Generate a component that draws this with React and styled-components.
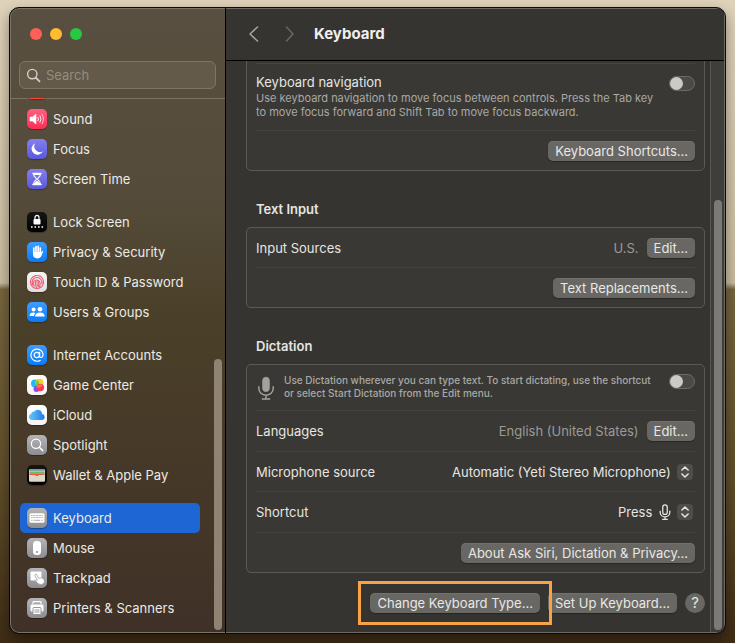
import React from 'react';
import styled, { createGlobalStyle } from 'styled-components';

const SIDEBAR = [
  [['', 'notifications']],
  [['Sound', 'sound'], ['Focus', 'focus'], ['Screen Time', 'hourglass']],
  [['Lock Screen', 'lock'], ['Privacy & Security', 'hand'], ['Touch ID & Password', 'touch'], ['Users & Groups', 'users']],
  [['Internet Accounts', 'at'], ['Game Center', 'game'], ['iCloud', 'cloud'], ['Spotlight', 'spotlight'], ['Wallet & Apple Pay', 'wallet']],
  [['Keyboard', 'keyboard'], ['Mouse', 'mouse'], ['Trackpad', 'trackpad'], ['Printers & Scanners', 'printer']],
];

const RED = 'linear-gradient(#ff6a60, #ff453a)';
const PINK = 'linear-gradient(#ff5f80, #fb2e55)';
const INDIGO = 'linear-gradient(#8280f0, #5b58dc)';
const BLUE = 'linear-gradient(#3d9cff, #0a7cf8)';
const GREY = 'linear-gradient(#b4b3b7, #8d8c91)';
const WHITE = 'linear-gradient(#ffffff, #f4f4f4)';
const BLACK = 'linear-gradient(#161616, #000000)';

const TILES = {
  notifications: RED,
  sound: PINK,
  focus: INDIGO,
  hourglass: INDIGO,
  lock: BLACK,
  hand: BLUE,
  touch: 'linear-gradient(#f6f6f6, #dedede)',
  users: BLUE,
  at: BLUE,
  game: WHITE,
  cloud: WHITE,
  spotlight: GREY,
  wallet: BLACK,
  keyboard: GREY,
  mouse: GREY,
  trackpad: GREY,
  printer: GREY,
};

const GLYPHS = {
  notifications: null,
  sound: (
    <>
      <path d="M3 8h2.400L9 5v10l-3.600-3H3z" fill="#fff" stroke="#fff" strokeWidth=".6" strokeLinejoin="round" />
      <g fill="none" stroke="#fff" strokeLinecap="round">
        <path d="M11 8.200q1.200 1.800 0 3.600" />
        <path d="M13 6.700q2.200 3.300 0 6.600" strokeOpacity=".85" />
        <path d="M15 5.300q3.100 4.700 0 9.400" strokeOpacity=".7" />
      </g>
    </>
  ),
  focus: <path d="M8.200 4.200A6 6 0 1 0 16 12.300 5.800 5.800 0 0 1 8.200 4.200z" fill="#fff" />,
  hourglass: (
    <>
      <path d="M6 4.500h8M6 15.500h8" stroke="#fff" strokeWidth="1.600" strokeLinecap="round" />
      <path d="M6.700 5.500c0 2.600 2.700 3 2.700 4.500s-2.700 1.900-2.700 4.500h6.600c0-2.600-2.700-3-2.700-4.500s2.700-1.900 2.700-4.500z" fill="none" stroke="#fff" strokeWidth="1.100" />
      <path d="M7.400 14.500q.6-2.200 2.600-2.700 2 .5 2.600 2.700z" fill="#fff" />
    </>
  ),
  lock: (
    <>
      <path d="M8 8V5.500a2 2.200 0 0 1 4 0V8" fill="none" stroke="#fff" strokeWidth="1.200" />
      <rect x="6.500" y="7" width="7" height="5.500" rx="1" fill="#fff" />
      <path d="M4 15h1.600M7.500 15h1.600M11 15h1.600M14.500 15h1.600" stroke="#fff" strokeWidth="1.600" />
    </>
  ),
  hand: (
    <>
      <path d="M6.800 6v6M9 4.500V11M11.200 4.300V11M13.300 6v6" stroke="#fff" strokeWidth="1.700" strokeLinecap="round" />
      <path d="M6 10h8.200v.8l.6-1.500q.9-.8 1.300.1l-1.500 4q-1.200 3-4.300 3-4.300 0-4.300-4.400z" fill="#fff" />
    </>
  ),
  touch: (
    <g fill="none" stroke="#ef5b70" strokeWidth="1.100" strokeLinecap="round">
      <circle cx="10" cy="10" r="6.500" strokeDasharray="8 .8 5 .8" />
      <path d="M5.400 12.500a5 5 0 1 1 9.400-.5M7.200 14a3.500 3.500 0 1 1 6-2.500q0 2-.9 3.600" />
      <path d="M9.500 15.500q-1.500-2.500-1.300-5a1.900 1.900 0 0 1 3.700 0q0 2.500-.8 4.500M10 10.500q0 2 .3 3" />
    </g>
  ),
  users: (
    <g fill="#fff">
      <circle cx="6.600" cy="7.600" r="2" />
      <circle cx="13" cy="7.200" r="2.300" />
      <path d="M2.500 14q.3-3.400 4-3.400 1.200 0 2 .5-1.400 1.200-1.500 2.900zM8 14.500q.3-4 5-4t4.700 4z" />
    </g>
  ),
  at: (
    <g fill="none" stroke="#fff" strokeWidth="1.200" strokeLinecap="round">
      <circle cx="9.800" cy="10" r="2.700" />
      <path d="M12.600 7.300v3.500q0 1.900 1.700 1.700 1.800-.3 1.800-2.700a6.100 6.100 0 1 0-3 5.600" />
    </g>
  ),
  game: (
    <>
      <circle cx="8" cy="8.500" r="4" fill="#26b9f1" />
      <circle cx="12.500" cy="7.800" r="4" fill="#f8ce2e" />
      <path d="M10 4.800q3 2 1.500 6L8.500 10z" fill="#52d455" />
      <circle cx="9.500" cy="14" r="3" fill="#8a4cf0" />
      <circle cx="13.300" cy="12.500" r="3.800" fill="#fb365c" />
      <path d="M9.700 11.300q2-3 6-1.600-2 3.200-5.200 3.200z" fill="#fb7a31" />
    </>
  ),
  cloud: (
    <>
      <defs>
        <linearGradient id="cloudFill">
          <stop offset="0" stopColor="#63c9f8" />
          <stop offset="1" stopColor="#2379e8" />
        </linearGradient>
      </defs>
      <path d="M5 15a3 3 0 0 1-.8-5.900 2.500 2.500 0 0 1 3.100-2.400A4.200 4.200 0 0 1 15 9.100a3 3 0 0 1 .4 5.900z" fill="url(#cloudFill)" />
    </>
  ),
  spotlight: (
    <g fill="none" stroke="#fff" strokeWidth="1.200" strokeLinecap="round">
      <circle cx="9" cy="8.800" r="4.600" />
      <path d="M12.400 12.300l3.300 3.300" strokeWidth="1.500" />
    </g>
  ),
  wallet: (
    <>
      <rect x="2" y="4" width="16" height="12.500" rx="1.500" fill="#dcd8c9" />
      <path d="M2.500 5h15" stroke="#3b8fc4" strokeWidth="1.500" />
      <path d="M2.500 6.500h15" stroke="#f1b72e" strokeWidth="1.500" />
      <path d="M2.500 8h15" stroke="#46b556" strokeWidth="1.500" />
      <path d="M2.500 9.500h15" stroke="#ee5a48" strokeWidth="1.200" />
      <path d="M2 10h5q1 0 1.600.9 1.400 1.300 2.800 0 .6-.9 1.600-.9h5v5q0 1.500-1.500 1.500h-13Q2 16.500 2 15z" fill="#dcd8c9" />
      <path d="M7 9.600h6q-1 0-1.600.9-1.400 1.400-2.800 0Q8 9.600 7 9.600z" fill="#ee5a48" />
    </>
  ),
  keyboard: (
    <>
      <rect x="2.500" y="5.300" width="15" height="9.400" rx="1.500" fill="#fff" />
      <path d="M4.200 7.500h11.600M4.200 9.500h11.600" stroke="#a9a8ac" strokeWidth="1.200" strokeDasharray="1 .5" />
      <path d="M4.200 12.300h1.500M6.800 12.300h6.400M14.300 12.300h1.500" stroke="#a9a8ac" />
    </>
  ),
  mouse: (
    <>
      <rect x="6" y="3" width="8" height="14" rx="3.500" fill="#fff" />
      <circle cx="10" cy="14" r="1" fill="#8d8c91" />
    </>
  ),
  trackpad: (
    <>
      <rect x="3.500" y="3.500" width="11" height="9" rx="1" fill="#fff" />
      <path d="M8 6.500q1-1 1.800.3l1.700 3.400q3-1 5 .5 1.800 2.300.5 4.500-2.700 2.600-5.600.6l-3.300-3q.2-1.200 1.500-.8l.7.300L7.800 7.500z" fill="#fff" stroke="#97969b" strokeWidth=".7" />
    </>
  ),
  printer: (
    <>
      <path d="M6 6V4.500q0-.8.8-.8h6.400q.8 0 .8.800V6" fill="none" stroke="#fff" strokeWidth="1.200" />
      <rect x="3.500" y="6.500" width="13" height="7" rx="1.300" fill="#fff" />
      <rect x="6" y="9.500" width="8" height="7" rx=".8" fill="#fff" stroke="#98979c" />
      <path d="M7.500 12h5M7.500 14h5" stroke="#98979c" />
    </>
  ),
};

function Mic({ outline, size }) {
  return (
    <svg width={size * 3 / 4} height={size} viewBox="0 0 15 20" aria-hidden="true">
      <rect x="4.700" y="1" width="5.600" height="12" rx="2.800" fill={outline ? 'none' : 'currentColor'} stroke="currentColor" strokeWidth={outline ? 1.600 : 0.6} />
      <path d="M1.500 8.500v2a6 5.500 0 0 0 12 0v-2M7.500 16v3M4 19.200h7" fill="none" stroke="currentColor" strokeWidth={outline ? 1.600 : 1.200} />
    </svg>
  );
}

function Stepper() {
  return (
    <StepperBox aria-hidden="true">
      <svg width="16" height="16" viewBox="0 0 16 16" fill="none" stroke="currentColor" strokeWidth="1.500" strokeLinecap="round" strokeLinejoin="round">
        <path d="M4.900 6L8 3l3.100 3M4.900 10L8 13l3.100-3" />
      </svg>
    </StepperBox>
  );
}

function Sidebar() {
  return (
    <SidebarPane>
      <Lights>
        <Light aria-label="Close" $color="#ff5f57" />
        <Light aria-label="Minimize" $color="#febc2e" />
        <Light aria-label="Zoom" $color="#28c840" />
      </Lights>
      <SearchBox>
        <svg width="15" height="15" viewBox="0 0 16 16" fill="none" stroke="#d5d1c8" strokeWidth="1.500" strokeLinecap="round" aria-hidden="true">
          <circle cx="6.700" cy="6.500" r="5" />
          <path d="M10.400 10.300l4 4" strokeWidth="1.900" />
        </svg>
        <SearchInput type="search" placeholder="Search" aria-label="Search" />
      </SearchBox>
      <SidebarScroll>
        <Nav>
          {SIDEBAR.map((group, i) => (
            <NavGroup key={i} $joined={i < 2}>
              {group.map(([label, icon]) => (
                <li key={icon}>
                  <NavLink href="#" $active={label === 'Keyboard'} aria-hidden={label ? undefined : true}>
                    <Tile viewBox="0 0 20 20" $fill={TILES[icon]}>
                      {GLYPHS[icon]}
                    </Tile>
                    {label}
                  </NavLink>
                </li>
              ))}
            </NavGroup>
          ))}
        </Nav>
        <SidebarTrack>
          <Thumb $size="51%" $color="#8f8474" />
        </SidebarTrack>
      </SidebarScroll>
    </SidebarPane>
  );
}

export default function App() {
  return (
    <Desktop>
      <GlobalStyle />
      <Window>
        <Sidebar />
        <Main>
          <Toolbar>
            <NavButton aria-label="Back" $color="#a5a4a2">
              <svg width="12" height="18" viewBox="0 0 12 18"><path d="M9.500 2L2 9l7.500 7" /></svg>
            </NavButton>
            <NavButton aria-label="Forward" $color="#696866">
              <svg width="12" height="18" viewBox="0 0 12 18"><path d="M2.500 2L9 9l-6.500 7" /></svg>
            </NavButton>
            <Title>Keyboard</Title>
          </Toolbar>
          <Scroller>
            <Content>
              <Card>
                <Row $height={12} />
                <Row $height={66} $top>
                  <Copy>
                    <label htmlFor="navigation">Keyboard navigation</label>
                    <Note>
                      Use keyboard navigation to move focus between controls. Press the Tab key
                      to move focus forward and Shift Tab to move focus backward.
                    </Note>
                  </Copy>
                  <Toggle id="navigation" type="checkbox" $drop={3} />
                </Row>
                <Row>
                  <PushButton>Keyboard Shortcuts…</PushButton>
                </Row>
              </Card>

              <SectionTitle>Text Input</SectionTitle>
              <Card>
                <Row>
                  <Name>Input Sources</Name>
                  <Value>U.S.</Value>
                  <PushButton>Edit…</PushButton>
                </Row>
                <Row>
                  <PushButton>Text Replacements…</PushButton>
                </Row>
              </Card>

              <SectionTitle>Dictation</SectionTitle>
              <Card>
                <Row $height={45} $top>
                  <MicBadge><Mic size={24} /></MicBadge>
                  <Copy>
                    <SmallNote as="label" htmlFor="dictation">
                      Use Dictation wherever you can type text. To start dictating, use the shortcut
                      or select Start Dictation from the Edit menu.
                    </SmallNote>
                  </Copy>
                  <Toggle id="dictation" type="checkbox" $drop={0} />
                </Row>
                <Row $height={40}>
                  <Name>Languages</Name>
                  <Value>English (United States)</Value>
                  <PushButton>Edit…</PushButton>
                </Row>
                <Row>
                  <Name as="label" htmlFor="microphone">Microphone source</Name>
                  <Popup>
                    <Select id="microphone">
                      <option>Automatic (Yeti Stereo Microphone)</option>
                    </Select>
                    <Stepper />
                  </Popup>
                </Row>
                <Row $height={40}>
                  <Name as="label" htmlFor="shortcut">Shortcut</Name>
                  <Popup>
                    <Select id="shortcut">
                      <option>Press</option>
                    </Select>
                    <Mic outline size={16} />
                    <Stepper />
                  </Popup>
                </Row>
                <Row>
                  <PushButton>About Ask Siri, Dictation &amp; Privacy…</PushButton>
                </Row>
              </Card>

              <Footer>
                <Highlight>
                  <PushButton>Change Keyboard Type…</PushButton>
                </Highlight>
                <PushButton>Set Up Keyboard…</PushButton>
                <HelpButton aria-label="Help">?</HelpButton>
              </Footer>
            </Content>
            <Track>
              <Thumb $size="75.5%" $color="#7b7a77" />
            </Track>
          </Scroller>
        </Main>
      </Window>
    </Desktop>
  );
}

/// styled components:

const GlobalStyle = createGlobalStyle`
  * {
    box-sizing: border-box;
  }

  body {
    margin: 0;
    color: #e6e5e2;
    font-family: Inter, 'Liberation Sans', sans-serif;
    font-size: 13px;
    line-height: 18px;
  }

  button,
  input,
  select {
    font: inherit;
    color: inherit;
  }
`;

const Desktop = styled.div`
  display: flex;
  height: 100vh;
  padding: 7px 9px 9px;
  background: linear-gradient(#dfd2bb, #c9bca0 44%, #76663f 45%, #5f4d29 75%, #3f2c16);
`;

const Window = styled.div`
  flex: 1;
  display: flex;
  min-width: 0;
  border: 1px solid #0a0a08;
  border-radius: 10px;
  overflow: hidden;
  background: #353430;
  box-shadow: 0 6px 14px rgba(0, 0, 0, 0.4);
`;

const SidebarPane = styled.aside`
  display: flex;
  flex-direction: column;
  width: 215px;
  flex-shrink: 0;
  border: 1px solid #7b7567;
  border-width: 1px 0 1px 1px;
  border-radius: 9px 0 0 9px;
  background: linear-gradient(#584f40, #544b3a 30%, #4a4029 50%, #463828 75%, #3f3127);
`;

const Lights = styled.div`
  display: flex;
  gap: 8px;
  padding: 19px 19px 21px;
`;

const Light = styled.button`
  width: 12px;
  height: 12px;
  padding: 0;
  border: 0;
  border-radius: 50%;
  background: ${(props) => props.$color};
`;

const SearchBox = styled.div`
  display: flex;
  align-items: center;
  gap: 5px;
  height: 28px;
  margin: 0 9px 9px 8px;
  padding: 0 6px;
  border: 1px solid #7d7566;
  border-radius: 6px;
  background: #635a4a;
`;

const SearchInput = styled.input`
  flex: 1;
  min-width: 0;
  padding: 0;
  border: 0;
  outline: 0;
  background: none;

  &::placeholder {
    color: #958d7f;
    opacity: 1;
  }
`;

const SidebarScroll = styled.div`
  flex: 1;
  display: flex;
  min-height: 0;
  box-shadow: inset 0 1px 0 #7b7361;
`;

const Nav = styled.nav`
  flex: 1;
  display: flex;
  flex-direction: column;
  justify-content: flex-end;
  padding: 0 14px 9px 9px;
  overflow: hidden;
`;

const NavGroup = styled.ul`
  margin: ${(props) => (props.$joined ? '0' : '13px 0 0')};
  padding: 0;
  list-style: none;
`;

const NavLink = styled.a`
  display: flex;
  align-items: center;
  gap: 6px;
  height: 30px;
  padding: 0 7px;
  border-radius: 5px;
  color: #eceae6;
  background: ${(props) => (props.$active ? '#1d66d3' : 'none')};
  text-decoration: none;
  white-space: nowrap;
`;

const Tile = styled.svg`
  width: 20px;
  height: 20px;
  border-radius: 5px;
  background: ${(props) => props.$fill};
  box-shadow: 0 1px 1px rgba(0, 0, 0, 0.3);
`;

const SidebarTrack = styled.div`
  display: flex;
  align-items: flex-end;
  padding: 0 3px 2px 0;
`;

const Thumb = styled.div`
  width: 8px;
  height: ${(props) => props.$size};
  border-radius: 4px;
  background: ${(props) => props.$color};
`;

const Main = styled.main`
  flex: 1;
  display: flex;
  flex-direction: column;
  min-width: 0;
  margin-left: 1px;
  border: 1px solid #6b6a67;
  border-width: 1px 1px 1px 0;
  border-radius: 0 9px 9px 0;
  box-shadow: -1px 0 0 #000;
`;

const Toolbar = styled.header`
  display: flex;
  align-items: center;
  gap: 24px;
  height: 52px;
  flex-shrink: 0;
  padding: 0 22px 1px;
  border-bottom: 1px solid #000;
  background: #363431;
`;

const NavButton = styled.button`
  display: flex;
  padding: 0;
  border: 0;
  background: none;

  svg {
    fill: none;
    stroke: ${(props) => props.$color};
    stroke-width: 1.5;
    stroke-linecap: round;
    stroke-linejoin: round;
  }
`;

const Title = styled.h1`
  margin: 0 0 0 -6px;
  color: #f0efed;
  font-size: 15px;
  font-weight: 700;
`;

const Scroller = styled.div`
  flex: 1;
  display: flex;
  min-height: 0;
`;

const Content = styled.div`
  flex: 1;
  display: flex;
  flex-direction: column;
  justify-content: flex-end;
  min-width: 0;
  padding: 0 5px 19px 20px;
  overflow: hidden;
`;

const Card = styled.section`
  flex-shrink: 0;
  padding: 0 9px;
  border: 1px solid #5b5a57;
  border-radius: 5px;
  background: #393834;
`;

const Row = styled.div`
  display: flex;
  align-items: ${(props) => (props.$top ? 'flex-start' : 'center')};
  justify-content: flex-end;
  gap: 8px;
  height: ${(props) => props.$height || 39}px;
  padding: ${(props) => (props.$top ? '9px 0' : '0')};

  & + & {
    box-shadow: 0 -1px 0 #454440;
    margin-top: 1px;
  }
`;

const Copy = styled.div`
  flex: 1;
  min-width: 0;
`;

const Note = styled.p`
  margin: 0;
  color: #a9a8a5;
  font-size: 11px;
  line-height: 14px;
`;

const SmallNote = styled(Note)`
  display: block;
  padding-right: 4px;
  font-size: 10px;
  font-weight: 500;
  line-height: 13px;
`;

const MicBadge = styled.div`
  display: flex;
  padding: 2px 1px 0;
  color: #a3a29f;
`;

const Toggle = styled.input`
  appearance: none;
  flex-shrink: 0;
  width: 26px;
  height: 15px;
  margin: ${(props) => props.$drop}px 0 0;
  border: 1px solid #6c6b68;
  border-radius: 8px;
  background: #4b4a47;

  &::before {
    content: '';
    display: block;
    width: 13px;
    height: 13px;
    border-radius: 50%;
    background: #cbcac8;
  }

  &:checked::before {
    margin-left: 11px;
  }
`;

const Name = styled.span`
  flex: 1;
`;

const Value = styled.span`
  color: #9b9a97;
`;

const PushButton = styled.button`
  height: 20px;
  padding: 0 7px;
  border: 0;
  border-radius: 5px;
  background: #686764;
  box-shadow: 0 1px 1px rgba(0, 0, 0, 0.3), inset 0 1px 0 #72716e;
  color: #e8e7e5;
  line-height: 20px;
  white-space: nowrap;
`;

const SectionTitle = styled.h2`
  flex-shrink: 0;
  margin: 0;
  padding: 29px 10px 9px;
  font-size: 13px;
  font-weight: 600;
`;

const Popup = styled.div`
  display: flex;
  align-items: center;
  gap: 6px;
  padding-right: 2px;
`;

const Select = styled.select`
  appearance: none;
  padding: 0;
  border: 0;
  outline: 0;
  background: none;
`;

const StepperBox = styled.span`
  display: flex;
  border-radius: 4px;
  background: #4e4d4a;
`;

const Footer = styled.footer`
  display: flex;
  flex-shrink: 0;
  justify-content: flex-end;
  gap: 8px;
  padding-top: 20px;
`;

const Highlight = styled.span`
  position: relative;
  display: flex;

  &::after {
    content: '';
    position: absolute;
    inset: -12px;
    border: 3px solid #f9a347;
    pointer-events: none;
  }
`;

const HelpButton = styled.button`
  width: 20px;
  height: 20px;
  padding: 0;
  border: 0;
  border-radius: 50%;
  background: #686764;
  font-size: 15px;
  line-height: 20px;
`;

const Track = styled.div`
  display: flex;
  align-items: flex-end;
  padding: 0 2px 2px 3px;
  border-left: 1px solid #595855;
  background: #3f3e3b;
`;
